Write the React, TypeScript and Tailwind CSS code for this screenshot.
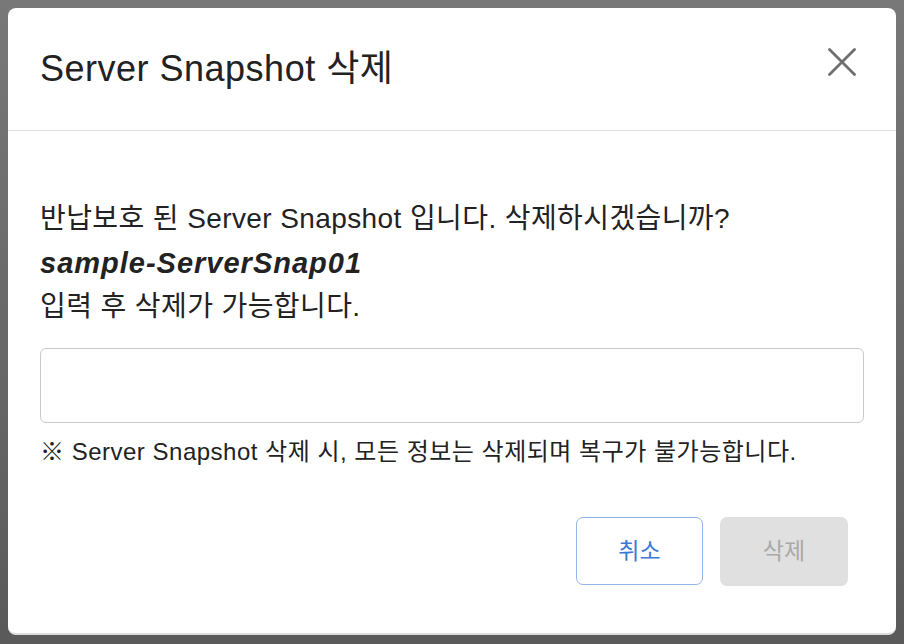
import React from 'react';

const FONT = '[font-family:"Liberation_Sans","Noto_Sans_CJK_KR",sans-serif]';

const CloseIcon: React.FC = () => (
  <svg width="28" height="28" viewBox="0 0 28 28" fill="none" stroke="#6f6f6f" strokeWidth="2.8" strokeLinecap="round">
    <line x1="1.5" y1="1.5" x2="26.5" y2="26.5" />
    <line x1="26.5" y1="1.5" x2="1.5" y2="26.5" />
  </svg>
);

export default function App() {
  return (
    <div className={`w-[904px] h-[644px] bg-gradient-to-b from-[#787878] to-[#5a5a5a] p-[8px] ${FONT}`}>
      <div className="w-[888px] h-[627px] bg-white rounded-[8px] border-b-2 border-[#dedede] flex flex-col">
        <div className="h-[123px] border-b-[1.5px] border-[#e2e2e2] flex items-center justify-between pl-[32px] pr-[40px]">
          <h1 className="text-[36px] tracking-[0.5px] text-[#222] leading-none">Server Snapshot 삭제</h1>
          <button type="button" className="-mt-[14px]">
            <CloseIcon />
          </button>
        </div>
        <div className="flex flex-col px-[32px] pt-[66px]">
          <p className="text-[28px] tracking-[0.4px] leading-[44px] text-[#222]">반납보호 된 Server Snapshot 입니다. 삭제하시겠습니까?</p>
          <p className="text-[29px] tracking-[1px] leading-[44px] text-[#222] font-bold italic">sample-ServerSnap01</p>
          <p className="text-[28px] tracking-[0.4px] leading-[44px] text-[#222]">입력 후 삭제가 가능합니다.</p>
          <input
            type="text"
            className="mt-[19px] h-[75px] w-full border-[1.5px] border-[#c9c9c9] rounded-[6px] outline-none px-4 text-[24px]"
          />
          <p className="mt-[14px] text-[24px] tracking-[0.5px] leading-[30px] text-[#222]">※ Server Snapshot 삭제 시, 모든 정보는 삭제되며 복구가 불가능합니다.</p>
        </div>
        <div className="flex justify-end gap-[17px] pr-[48px] mt-[50px]">
          <button type="button" className="w-[127px] h-[68px] rounded-[7px] border-[1.5px] border-[#92b6e8] bg-white text-[#3b79d2] text-[23px]">
            취소
          </button>
          <button type="button" disabled className="w-[128px] h-[69px] rounded-[7px] bg-[#e0e0e0] text-[#a9a9a9] text-[23px]">
            삭제
          </button>
        </div>
      </div>
    </div>
  );
}
